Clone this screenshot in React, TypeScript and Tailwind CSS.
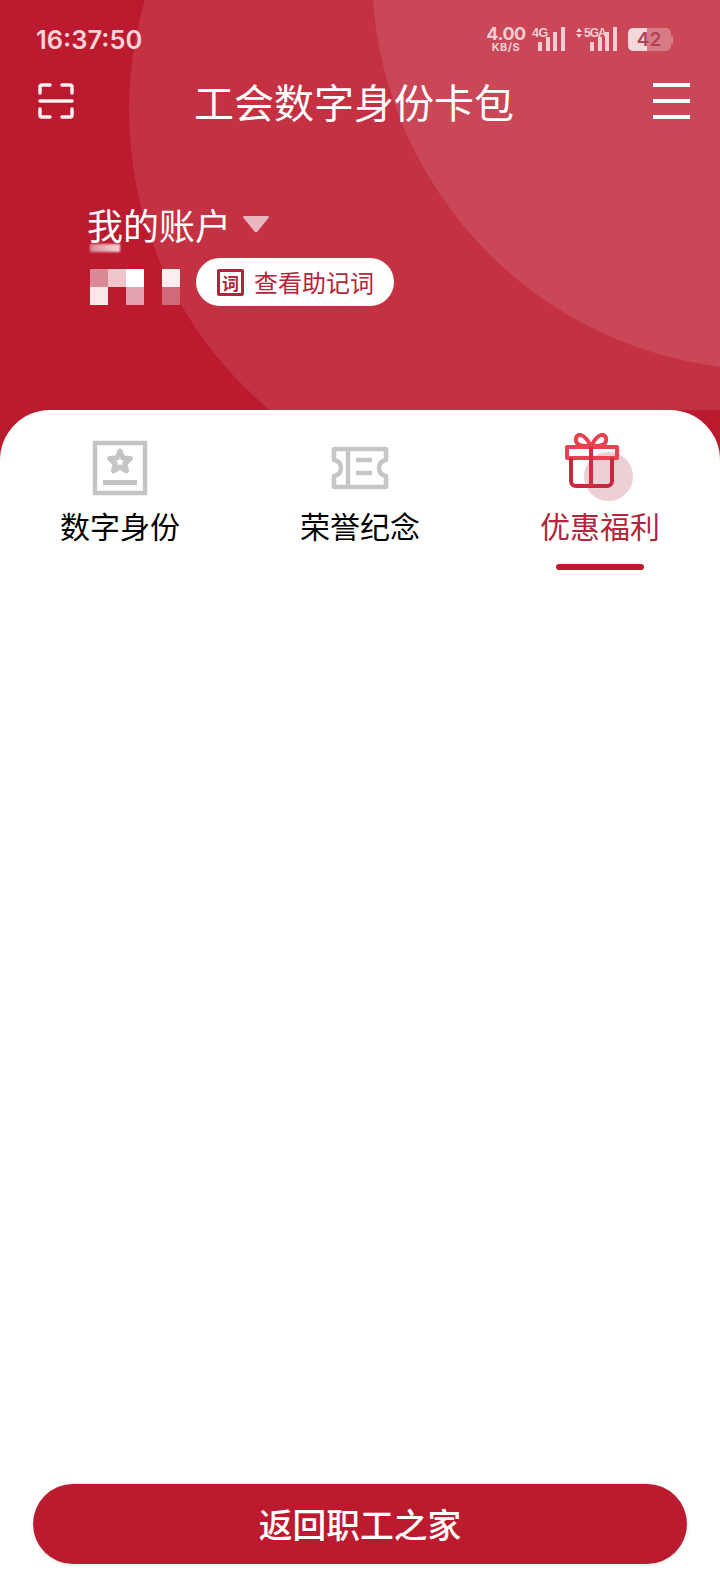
import React from 'react';

const ScanIcon = () => (
  <svg width="36" height="36" viewBox="0 0 36 36" fill="none" stroke="#fdeef0" strokeWidth="3.5" strokeLinecap="round">
    <path d="M12 2H4a2 2 0 0 0-2 2v6" />
    <path d="M24 2h8a2 2 0 0 1 2 2v6" />
    <path d="M2 26v6a2 2 0 0 0 2 2h8" />
    <path d="M34 26v6a2 2 0 0 1-2 2h-8" />
    <path d="M2 18h32" />
  </svg>
);

const Signal = () => (
  <svg width="28" height="25" viewBox="0 0 28 25" fill="#f6cdd2">
    <rect x="0" y="16" width="4" height="9" />
    <rect x="8" y="11" width="4" height="14" />
    <rect x="15" y="6" width="4" height="19" />
    <rect x="23" y="1" width="4" height="24" />
  </svg>
);

const StarIcon = () => (
  <svg width="56" height="56" viewBox="0 0 56 56" fill="none" stroke="#c4c4c4">
    <rect x="3" y="3" width="50" height="50" strokeWidth="4.5" />
    <path d="M28 11L30.9 18L38.5 18.6L32.8 23.5L34.5 30.9L28 27L21.5 30.9L23.2 23.5L17.5 18.6L25.1 18Z" strokeWidth="5" strokeLinejoin="round" />
    <rect x="11" y="40" width="34" height="5" fill="#c4c4c4" stroke="none" />
  </svg>
);

const TicketIcon = () => (
  <svg width="58" height="44" viewBox="0 0 58 44" fill="none" stroke="#c6c6c6" strokeWidth="4.5" strokeLinejoin="round">
    <path d="M3 3h52v11c-5 1-7 4-7 8s2 7 7 8v11H3V30c5-1 7-4 7-8s-2-7-7-8z" />
    <path d="M17 3v38" />
    <path d="M25 14h16M25 27h16" />
  </svg>
);

const GiftIcon = () => (
  <div className="relative w-[68px] h-[70px]">
    <div className="absolute left-[18px] top-[19px] w-[49px] h-[49px] rounded-full bg-[#edd0d5]" />
    <svg className="absolute left-[-1px] top-0" width="54" height="56" viewBox="0 0 54 56" fill="none" strokeWidth="4" strokeLinejoin="round">
      <path d="M26 13C22 6 18 1 14 2c-4 1-4 7-1 9 2 1.500 8 2 13 2zM26 13c4-7 8-12 12-11 4 1 4 7 1 9-2 1.500-8 2-13 2z" stroke="#e8414f" />
      <rect x="2" y="14" width="50" height="11" stroke="#e8414f" />
      <path d="M6 25v23a5 5 0 0 0 5 5h31a5 5 0 0 0 5-5V25" stroke="#c8283c" />
      <path d="M26 14v39" stroke="#d02f42" />
    </svg>
  </div>
);

const tabs = [
  { label: '数字身份', icon: <StarIcon />, active: false },
  { label: '荣誉纪念', icon: <TicketIcon />, active: false },
  { label: '优惠福利', icon: <GiftIcon />, active: true },
];

export default function App() {
  return (
    <div className="relative w-[720px] h-[1584px] overflow-hidden bg-[#bc1a2e] flex flex-col font-['Noto_Sans_CJK_SC',sans-serif]">
      <div className="relative h-[410px] shrink-0 flex flex-col overflow-hidden">
        {/* background circles */}
        <div className="absolute left-[129px] top-[-280px] w-[780px] h-[780px] rounded-full bg-[#c43142]" />
        <div className="absolute left-[372px] top-[-426px] w-[796px] h-[796px] rounded-full bg-[#c94757]" />

        {/* status bar */}
        <div className="relative flex items-start justify-between pl-[36px] pr-[47px] pt-[25px] h-[76px]">
          <span className="font-['Inter',sans-serif] text-[25.5px] leading-[30px] font-semibold text-[#f8d3d7]">16:37:50</span>
          <div className="flex items-start text-[#f6cdd2] font-['Inter',sans-serif] font-bold">
            <div className="flex flex-col items-center w-[40px] mt-[1px]">
              <span className="text-[18px] leading-[16px] tracking-[-0.5px]">4.00</span>
              <span className="text-[11px] leading-[10px] tracking-[0.5px]">KB/S</span>
            </div>
            <span className="font-['Liberation_Sans_Narrow','Liberation_Sans',sans-serif] text-[12.5px] leading-[12px] tracking-[-0.5px] ml-[6px] mt-[2px] w-[16px]">4G</span>
            <div className="ml-[-10px] mt-[1px]"><Signal /></div>
            <svg className="ml-[10px] mt-[3px]" width="6" height="10" viewBox="0 0 6 10" fill="#f6cdd2">
              <path d="M3 0l3 4H0zM3 10L0 6h6z" />
            </svg>
            <span className="font-['Liberation_Sans_Narrow','Liberation_Sans',sans-serif] text-[12px] leading-[12px] tracking-[-1px] ml-[2px] mt-[2px] w-[20px] whitespace-nowrap">5GA</span>
            <div className="ml-[-14px] mt-[1px]"><Signal /></div>
            <div className="relative ml-[10px] mt-[3px] w-[45px] h-[23px] flex">
              <div className="flex-1 flex rounded-[5px] overflow-hidden">
                <div className="w-[19px] bg-[#f3d7da]" />
                <div className="flex-1 bg-[#d77b86]" />
              </div>
              <div className="w-[2px] h-[8px] self-center bg-[#d77b86]" />
              <span className="absolute inset-0 pr-[3px] text-center text-[19px] leading-[23px] font-semibold text-[#b04052]">42</span>
            </div>
          </div>
        </div>

        {/* title row */}
        <div className="relative flex items-center pl-[38px] pr-[30px] h-[50px]">
          <ScanIcon />
          <h1 className="ml-[120px] text-[40px] leading-[50px] font-normal text-white">工会数字身份卡包</h1>
          <div className="ml-auto w-[37px] flex flex-col gap-[12px]">
            <div className="h-[4px] bg-white" />
            <div className="h-[4px] bg-white" />
            <div className="h-[4px] bg-white" />
          </div>
        </div>

        {/* account */}
        <div className="relative pl-[87px] pt-[73px]">
          <div className="flex items-center h-[50px]">
            <span className="text-[36px] leading-[50px] text-white">我的账户</span>
            <svg className="ml-[12px]" width="26" height="17" viewBox="0 0 26 17" fill="#eab6bd">
              <path d="M1 0h24a1 1 0 0 1 .8 1.600L14.500 15.500a2 2 0 0 1-3 0L.2 1.600A1 1 0 0 1 1 0z" />
            </svg>
          </div>
          <div className="flex items-start mt-[9px]">
            <div className="relative ml-[3px] mt-[11px] w-[90px]">
              <div className="absolute left-0 top-[-25px] w-[30px] h-[8px] bg-gradient-to-r from-[#d98a96] to-[#f5d8dc] blur-[1px]" />
              <div className="grid grid-cols-[repeat(5,18px)] grid-rows-[18px_18px]">
                <div className="bg-[#d98a96]" />
                <div className="bg-[#f0c5cc]" />
                <div className="bg-white" />
                <div />
                <div className="bg-[#fdeef0]" />
                <div className="bg-[#fbe8ea]" />
                <div />
                <div className="bg-[#e3a2ad]" />
                <div />
                <div className="bg-[#ce6a79]" />
              </div>
            </div>
            <div className="ml-[16px] flex items-center h-[48px] w-[198px] rounded-full bg-white pl-[21px] text-[#b3263a]">
              <div className="w-[27px] h-[27px] border-[3px] border-[#b3263a] rounded-[2px] flex items-center justify-center text-[17px] leading-none font-bold">词</div>
              <span className="ml-[10px] text-[24px] leading-[30px]">查看助记词</span>
            </div>
          </div>
        </div>
      </div>

      {/* white sheet */}
      <div className="relative flex-1 bg-white rounded-t-[50px] flex flex-col">
        <div className="grid grid-cols-3 pt-[25px]">
          {tabs.map((tab) => (
            <div key={tab.label} className="flex flex-col items-center">
              <div className="h-[66px] flex items-center justify-center">{tab.icon}</div>
              <span className={`mt-[2px] text-[30px] leading-[44px] ${tab.active ? 'text-[#b3263a]' : 'text-black'}`}>{tab.label}</span>
              <div className={`mt-[17px] w-[88px] h-[6px] rounded-full ${tab.active ? 'bg-[#bc1a2e]' : 'bg-transparent'}`} />
            </div>
          ))}
        </div>
        <div className="mt-auto px-[33px] pb-[20px]">
          <button className="w-full h-[80px] rounded-full bg-[#bc1a2e] text-white text-[33.75px] font-medium shadow-[0_1px_4px_rgba(0,0,0,0.1)]">
            返回职工之家
          </button>
        </div>
      </div>
    </div>
  );
}
